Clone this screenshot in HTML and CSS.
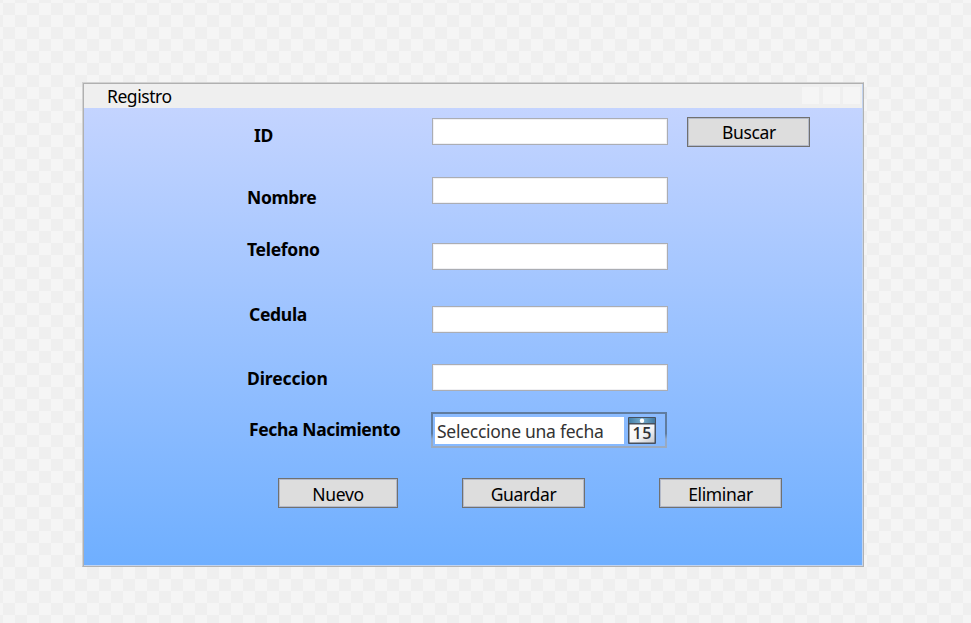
FILE: index.html
```
<!DOCTYPE html>
<html lang="es">
<head>
<meta charset="utf-8">
<title>Registro</title>
<link rel="stylesheet" href="styles.css">
</head>
<body>
<main class="window">
  <header class="titlebar">
    <span class="title">Registro</span>
    <div class="controls"><i></i><i></i><i></i></div>
  </header>
  <form class="form">
    <div class="row row-id">
      <label><span>ID</span></label>
      <input type="text">
      <button type="button" class="search"><span>Buscar</span></button>
    </div>
    <div class="row row-nombre"><label><span>Nombre</span></label><input type="text"></div>
    <div class="row row-telefono"><label><span>Telefono</span></label><input type="text"></div>
    <div class="row row-cedula"><label><span>Cedula</span></label><input type="text"></div>
    <div class="row row-direccion"><label><span>Direccion</span></label><input type="text"></div>
    <div class="row row-fecha">
      <label><span>Fecha Nacimiento</span></label>
      <div class="datepicker">
        <div class="date-text"><span>Seleccione una fecha</span></div>
        <svg class="calendar" width="30" height="28" viewBox="0 0 30 28">
          <defs>
            <linearGradient id="head" x1="0" x2="1" y1="0" y2="0"><stop offset="0" stop-color="#4580a8"/><stop offset=".5" stop-color="#78aed0"/><stop offset="1" stop-color="#42779e"/></linearGradient>
            <linearGradient id="page" x1="0" x2="1" y1="0" y2="1"><stop offset="0" stop-color="#fff"/><stop offset=".55" stop-color="#f4f4f6"/><stop offset="1" stop-color="#c8c9cd"/></linearGradient>
          </defs>
          <rect x="1" y="0" width="28" height="27" rx="1" fill="#47505d"/>
          <rect x="2" y="1" width="26" height="5" fill="url(#head)"/>
          <rect x="2.5" y="7.5" width="25" height="18" fill="url(#page)"/>
          <circle cx="15" cy="3.8" r="2.2" fill="#fff"/>
          <text x="5.5" y="22.3" textLength="19">15</text>
        </svg>
      </div>
    </div>
    <div class="actions">
      <button type="button" class="nuevo"><span>Nuevo</span></button>
      <button type="button"><span>Guardar</span></button>
      <button type="button" class="eliminar"><span>Eliminar</span></button>
    </div>
  </form>
</main>
</body>
</html>
```
FILE: styles.css
```
* { box-sizing: border-box; }
html { height: 100%; }
body {
  margin: 0;
  height: 623px;
  overflow: hidden;
  padding: 82px 0 0 82px;
  background: conic-gradient(#f5f5f5 25%, #efefef 0 50%, #f5f5f5 0 75%, #efefef 0) 3px 3px / 24px 24px;
  font: 17.5px/24px "Noto Sans", "Open Sans", sans-serif;
  color: #000;
}
span { display: inline-block; letter-spacing: -0.35px; }
.window {
  width: 782px;
  height: 485px;
  border: 1px solid #b2b2b2;
  border-top-color: #d2d2d2;
  border-left-color: #d2d2d2;
  box-shadow: inset 1px 1px #b0b0b0, inset -1px -1px #c2d3ee;
  padding: 1px;
}
.titlebar {
  height: 24px;
  background: #efefef;
  display: flex;
  justify-content: space-between;
  padding: 0 2px 0 23px;
}
.title { line-height: 24px; white-space: nowrap; letter-spacing: -0.45px; }
.controls { display: flex; padding-top: 3px; }
.controls i { width: 17px; height: 17px; background: #f5f5f5; }
.controls i:nth-child(2) { margin: 0 3px 0 4px; }
.form {
  height: 457px;
  background: linear-gradient(#c4d4ff, #6fafff);
}
.row { display: flex; align-items: flex-start; height: 60px; }
.row label {
  width: 348px;
  padding-left: 163px;
  font-weight: 700;
  white-space: nowrap;
}
.row label span { letter-spacing: -0.3px; }
.row input {
  width: 236px;
  height: 27px;
  padding: 0 4px;
  border: 1px solid #abadb3;
  border-radius: 0;
  background: #fff;
  box-shadow: inset 0 0 0 1px #f0f0f3;
  font: inherit;
  outline: none;
}
.row-id label { margin-top: 15px; padding-left: 170px; }
.row-id input { margin-top: 10px; }
.search { margin: 9px 0 0 19px; }
.row-nombre label { margin-top: 17px; }
.row-nombre input { margin-top: 9px; }
.row-telefono { height: 68px; }
.row-telefono label { margin-top: 9px; }
.row-telefono input { margin-top: 15px; }
.row-cedula { height: 58px; }
.row-cedula label { margin-top: 6px; padding-left: 165px; }
.row-cedula input { margin-top: 10px; }
.row-direccion { height: 54px; }
.row-direccion label { margin-top: 12px; }
.row-direccion label span { letter-spacing: -0.1px; }
.row-direccion input { margin-top: 10px; }
.row-fecha { height: 70px; }
.row-fecha label { margin-top: 9px; width: 347px; padding-left: 165px; }
.row-fecha label span { letter-spacing: -0.37px; }
.datepicker {
  display: flex;
  width: 236px;
  height: 36px;
  margin-top: 4px;
  padding: 3px;
  border: 2px solid;
  border-image: linear-gradient(#607c9e 0 60%, #92a9c9 75%, #9caabd) 2;
}
.date-text {
  width: 189px;
  height: 27px;
  margin-left: -1px;
  padding-left: 2px;
  background: #fff;
  color: #333;
  line-height: 29px;
  white-space: nowrap;
}
.date-text span { letter-spacing: -0.27px; }
.calendar { margin-left: 3px; flex: none; }
.calendar text { font: 600 16px "Open Sans", sans-serif; fill: #2f3136; }
.actions { display: flex; padding-left: 194px; }
.nuevo { width: 120px; margin-right: 64px; }
.eliminar { margin-left: 74px; }
button {
  width: 123px;
  height: 30px;
  padding: 1px 0 0;
  border: 1px solid #707070;
  border-radius: 0;
  background: #ddd;
  box-shadow: inset 0 0 0 1px #b4bac9;
  font: inherit;
  color: #000;
}
.search { padding: 0 0 1px 1px; }
```
